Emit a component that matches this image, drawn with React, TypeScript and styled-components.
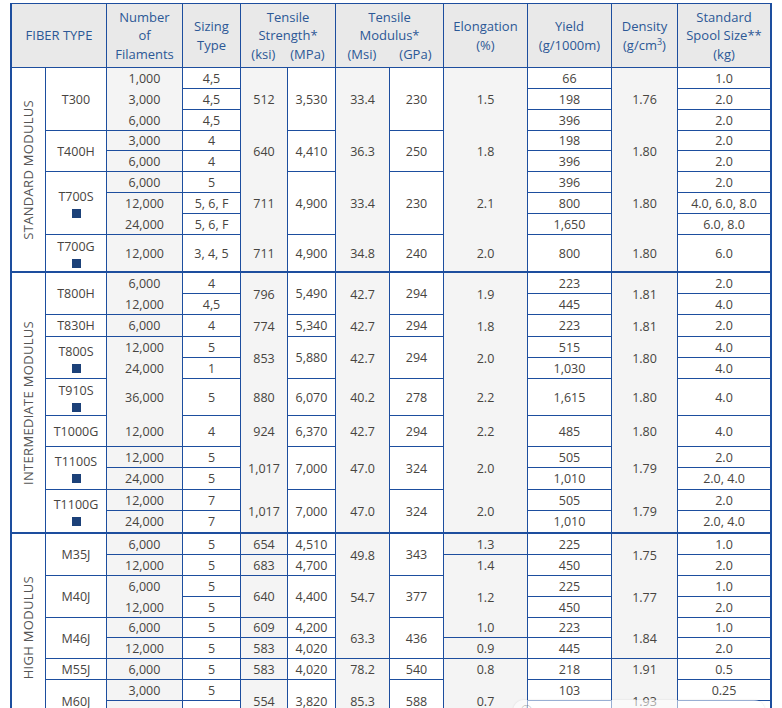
import React from 'react';
import styled, { createGlobalStyle } from 'styled-components';

const BORDER = '#1d4e9e';
const HEAD_TEXT = '#2c5896';
const TEXT = '#474440';

type B = 'n' | 'l' | 't';

const COLS = [34, 61, 76, 58, 47, 48, 54, 54, 84, 84, 66, 94];
const ROWS = [21, 21, 21, 20, 21, 21, 21, 21, 38, 21, 21, 22, 21, 21, 37, 31, 21, 22, 21, 23, 21, 21, 21, 21, 20, 21, 21, 21, 22];

const GlobalStyle = createGlobalStyle`
  html, body { margin: 0; padding: 0; background: #ffffff; }
  body { font-family: "Open Sans", "Noto Sans", Arial, sans-serif; overflow: hidden; }
`;

const Page = styled.div`
  position: relative;
  padding: 3px 0 0 10px;
`;

const Table = styled.div`
  display: grid;
  grid-template-columns: ${COLS.map((c) => `${c}px`).join(' ')};
  grid-template-rows: 64px ${ROWS.map((r) => `${r}px`).join(' ')};
  border-left: 2px solid ${BORDER};
  border-top: 1px solid ${BORDER};
  width: max-content;
`;

interface CellProps {
  $row: number;
  $span: number;
  $col: number;
  $cspan?: number;
  $gray?: boolean;
  $bottom: B;
  $last?: boolean;
}

const Cell = styled.div<CellProps>`
  grid-row: ${(p) => p.$row} / span ${(p) => p.$span};
  grid-column: ${(p) => p.$col} / span ${(p) => p.$cspan ?? 1};
  box-sizing: border-box;
  display: flex;
  flex-direction: column;
  align-items: center;
  justify-content: center;
  background: ${(p) => (p.$gray ? '#f4f4f4' : '#ffffff')};
  border-right: ${(p) => (p.$last ? 2 : 1)}px solid ${BORDER};
  border-bottom: ${(p) =>
    p.$bottom === 'n' ? '0' : p.$bottom === 't' ? `2px solid ${BORDER}` : `1px solid ${BORDER}`};
  font-size: 12.5px;
  line-height: 17px;
  color: ${TEXT};
  text-align: center;
  white-space: nowrap;
`;

const HeadCell = styled.div<{ $col: number; $cspan?: number; $last?: boolean }>`
  grid-row: 1;
  grid-column: ${(p) => p.$col} / span ${(p) => p.$cspan ?? 1};
  box-sizing: border-box;
  display: flex;
  flex-direction: column;
  align-items: center;
  justify-content: center;
  background: #e9e9e9;
  border-right: ${(p) => (p.$last ? 2 : 1)}px solid ${BORDER};
  border-bottom: 1px solid ${BORDER};
  font-size: 13px;
  line-height: 18.5px;
  color: ${HEAD_TEXT};
  text-align: center;
  white-space: nowrap;
`;

const Line = styled.span`
  display: block;
`;

const Units = styled.span<{ $gap: number }>`
  display: flex;
  justify-content: center;
  gap: ${(p) => p.$gap}px;
`;

const Sup = styled.sup`
  font-size: 9px;
  line-height: 0;
  vertical-align: 5px;
`;

const Mark = styled.span`
  display: block;
  width: 9px;
  height: 9px;
  margin-top: 4px;
  background: #1c4179;
`;

const CatText = styled.span`
  writing-mode: vertical-rl;
  transform: rotate(180deg);
  font-size: 13px;
  letter-spacing: 0.3px;
  color: #555555;
`;

const Pill = styled.div`
  position: absolute;
  left: 513px;
  top: 700px;
  width: 252px;
  height: 22px;
  border-radius: 11px;
  background: rgba(255, 255, 255, 0.55);
  box-shadow: 0 0 2px rgba(0, 0, 0, 0.12);
  font-size: 11px;
  line-height: 20px;
  padding-left: 8px;
  box-sizing: border-box;
  color: rgba(90, 90, 90, 0.5);
`;

type Spec = [string, number, B, boolean?];

const cat: Spec[] = [
  ['STANDARD MODULUS', 9, 't'],
  ['INTERMEDIATE MODULUS', 11, 't'],
  ['HIGH MODULUS', 9, 'l'],
];

const fiber: Spec[] = [
  ['T300', 3, 'l'],
  ['T400H', 2, 'l'],
  ['T700S', 3, 'l', true],
  ['T700G', 1, 't', true],
  ['T800H', 2, 'l'],
  ['T830H', 1, 'l'],
  ['T800S', 2, 'l', true],
  ['T910S', 1, 'l', true],
  ['T1000G', 1, 'l'],
  ['T1100S', 2, 'l', true],
  ['T1100G', 2, 't', true],
  ['M35J', 2, 'l'],
  ['M40J', 2, 'l'],
  ['M46J', 2, 'l'],
  ['M55J', 1, 'l'],
  ['M60J', 2, 'l'],
];

const ksi: Spec[] = [
  ['512', 3, 'n'], ['640', 2, 'n'], ['711', 3, 'n'], ['711', 1, 't'],
  ['796', 2, 'n'], ['774', 1, 'n'], ['853', 2, 'n'], ['880', 1, 'n'], ['924', 1, 'n'],
  ['1,017', 2, 'n'], ['1,017', 2, 't'],
  ['654', 1, 'l'], ['683', 1, 'l'], ['640', 2, 'l'], ['609', 1, 'l'], ['583', 1, 'l'],
  ['583', 1, 'l'], ['554', 2, 'l'],
];

const mpa: Spec[] = [
  ['3,530', 3, 'l'], ['4,410', 2, 'l'], ['4,900', 3, 'l'], ['4,900', 1, 't'],
  ['5,490', 2, 'l'], ['5,340', 1, 'l'], ['5,880', 2, 'l'], ['6,070', 1, 'l'], ['6,370', 1, 'l'],
  ['7,000', 2, 'l'], ['7,000', 2, 't'],
  ['4,510', 1, 'l'], ['4,700', 1, 'l'], ['4,400', 2, 'l'], ['4,200', 1, 'l'], ['4,020', 1, 'l'],
  ['4,020', 1, 'l'], ['3,820', 2, 'l'],
];

const msi: Spec[] = [
  ['33.4', 3, 'n'], ['36.3', 2, 'n'], ['33.4', 3, 'n'], ['34.8', 1, 't'],
  ['42.7', 2, 'n'], ['42.7', 1, 'n'], ['42.7', 2, 'n'], ['40.2', 1, 'n'], ['42.7', 1, 'n'],
  ['47.0', 2, 'n'], ['47.0', 2, 't'],
  ['49.8', 2, 'n'], ['54.7', 2, 'n'], ['63.3', 2, 'l'], ['78.2', 1, 'n'], ['85.3', 2, 'n'],
];

const gpa: Spec[] = [
  ['230', 3, 'l'], ['250', 2, 'l'], ['230', 3, 'l'], ['240', 1, 't'],
  ['294', 2, 'l'], ['294', 1, 'l'], ['294', 2, 'l'], ['278', 1, 'l'], ['294', 1, 'l'],
  ['324', 2, 'l'], ['324', 2, 't'],
  ['343', 2, 'l'], ['377', 2, 'l'], ['436', 2, 'l'], ['540', 1, 'l'], ['588', 2, 'l'],
];

const elong: Spec[] = [
  ['1.5', 3, 'n'], ['1.8', 2, 'n'], ['2.1', 3, 'n'], ['2.0', 1, 't'],
  ['1.9', 2, 'n'], ['1.8', 1, 'n'], ['2.0', 2, 'n'], ['2.2', 1, 'n'], ['2.2', 1, 'n'],
  ['2.0', 2, 'n'], ['2.0', 2, 't'],
  ['1.3', 1, 'l'], ['1.4', 1, 'n'], ['1.2', 2, 'n'], ['1.0', 1, 'l'], ['0.9', 1, 'l'],
  ['0.8', 1, 'n'], ['0.7', 2, 'n'],
];

const density: Spec[] = [
  ['1.76', 3, 'n'], ['1.80', 2, 'n'], ['1.80', 3, 'n'], ['1.80', 1, 't'],
  ['1.81', 2, 'n'], ['1.81', 1, 'n'], ['1.80', 2, 'n'], ['1.80', 1, 'n'], ['1.80', 1, 'n'],
  ['1.79', 2, 'n'], ['1.79', 2, 't'],
  ['1.75', 2, 'n'], ['1.77', 2, 'n'], ['1.84', 2, 'l'], ['1.91', 1, 'n'], ['1.93', 2, 'n'],
];

const sizing = ['4,5', '4,5', '4,5', '4', '4', '5', '5, 6, F', '5, 6, F', '3, 4, 5', '4', '4,5', '4', '5', '1', '5', '4', '5', '5', '7', '7', '5', '5', '5', '5', '5', '5', '5', '5', ''];
const yieldVals = ['66', '198', '396', '198', '396', '396', '800', '1,650', '800', '223', '445', '223', '515', '1,030', '1,615', '485', '505', '1,010', '505', '1,010', '225', '450', '225', '450', '223', '445', '218', '103', ''];
const spool = ['1.0', '2.0', '2.0', '2.0', '2.0', '2.0', '4.0, 6.0, 8.0', '6.0, 8.0', '6.0', '2.0', '4.0', '2.0', '4.0', '4.0', '4.0', '4.0', '2.0', '2.0, 4.0', '2.0', '2.0, 4.0', '1.0', '2.0', '1.0', '2.0', '1.0', '2.0', '0.5', '0.25', ''];
const filaments = ['1,000', '3,000', '6,000', '3,000', '6,000', '6,000', '12,000', '24,000', '12,000', '6,000', '12,000', '6,000', '12,000', '24,000', '36,000', '12,000', '12,000', '24,000', '12,000', '24,000', '6,000', '12,000', '6,000', '12,000', '6,000', '12,000', '6,000', '3,000', ''];
const filBottoms = 'nnllllnltnllnnnlllltllnllllll';

const perRowBottom = (i: number): B => (i === 8 || i === 19 ? 't' : 'l');

const perRow = (vals: string[], bottoms?: string): Spec[] =>
  vals.map((v, i) => [v, 1, bottoms ? (bottoms[i] as B) : perRowBottom(i)]);

type ColDef = { specs: Spec[]; gray?: boolean; kind?: 'cat' | 'fiber' };

const columns: ColDef[] = [
  { specs: cat, kind: 'cat' },
  { specs: fiber, kind: 'fiber' },
  { specs: perRow(filaments, filBottoms), gray: true },
  { specs: perRow(sizing) },
  { specs: ksi, gray: true },
  { specs: mpa },
  { specs: msi, gray: true },
  { specs: gpa },
  { specs: elong, gray: true },
  { specs: perRow(yieldVals) },
  { specs: density, gray: true },
  { specs: perRow(spool) },
];

function renderColumn(def: ColDef, colIndex: number) {
  let row = 2;
  return def.specs.map(([text, span, bottom, mark], i) => {
    const start = row;
    row += span;
    return (
      <Cell
        key={`${colIndex}-${i}`}
        $row={start}
        $span={span}
        $col={colIndex + 1}
        $gray={def.gray}
        $bottom={bottom}
        $last={colIndex === COLS.length - 1}
      >
        {def.kind === 'cat' ? <CatText>{text}</CatText> : text}
        {mark ? <Mark /> : null}
      </Cell>
    );
  });
}

export default function App() {
  return (
    <>
      <GlobalStyle />
      <Page>
        <Table>
          <HeadCell $col={1} $cspan={2}>FIBER TYPE</HeadCell>
          <HeadCell $col={3}>
            <Line>Number</Line>
            <Line>of</Line>
            <Line>Filaments</Line>
          </HeadCell>
          <HeadCell $col={4}>
            <Line>Sizing</Line>
            <Line>Type</Line>
          </HeadCell>
          <HeadCell $col={5} $cspan={2}>
            <Line>Tensile</Line>
            <Line>Strength*</Line>
            <Units $gap={15}>
              <span>(ksi)</span>
              <span>(MPa)</span>
            </Units>
          </HeadCell>
          <HeadCell $col={7} $cspan={2}>
            <Line>Tensile</Line>
            <Line>Modulus*</Line>
            <Units $gap={23}>
              <span>(Msi)</span>
              <span>(GPa)</span>
            </Units>
          </HeadCell>
          <HeadCell $col={9}>
            <Line>Elongation</Line>
            <Line>(%)</Line>
          </HeadCell>
          <HeadCell $col={10}>
            <Line>Yield</Line>
            <Line>(g/1000m)</Line>
          </HeadCell>
          <HeadCell $col={11}>
            <Line>Density</Line>
            <Line>
              (g/cm<Sup>3</Sup>)
            </Line>
          </HeadCell>
          <HeadCell $col={12} $last>
            <Line>Standard</Line>
            <Line>Spool Size**</Line>
            <Line>(kg)</Line>
          </HeadCell>
          {columns.map((def, i) => renderColumn(def, i))}
        </Table>
        <Pill>ⓘ</Pill>
      </Page>
    </>
  );
}
